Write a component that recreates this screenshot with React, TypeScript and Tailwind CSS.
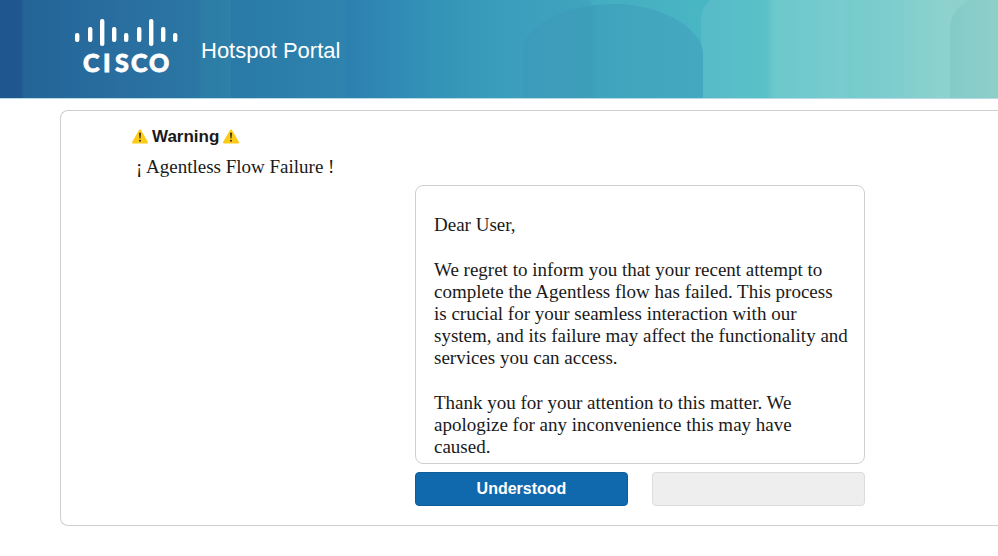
import React from "react";

function HeaderArt() {
  return (
    <svg
      className="absolute inset-0 h-full w-full"
      viewBox="0 0 998 98"
      preserveAspectRatio="none"
      aria-hidden="true"
    >
      <defs>
        <linearGradient id="base" gradientUnits="userSpaceOnUse" x1="0" y1="0" x2="998" y2="0">
          <stop offset="0" stopColor="#1f558f" />
          <stop offset="0.021" stopColor="#20578f" />
          <stop offset="0.024" stopColor="#246497" />
          <stop offset="0.1" stopColor="#286c9e" />
          <stop offset="0.199" stopColor="#2b77a4" />
          <stop offset="0.202" stopColor="#2c7ca5" />
          <stop offset="0.231" stopColor="#2e80a8" />
          <stop offset="0.2311" stopColor="#2a79a7" />
          <stop offset="0.343" stopColor="#2e84ae" />
          <stop offset="0.35" stopColor="#2c80b0" />
          <stop offset="0.44" stopColor="#3494b8" />
          <stop offset="0.5" stopColor="#3b9dbc" />
          <stop offset="0.59" stopColor="#40a4bd" />
          <stop offset="0.594" stopColor="#44acc0" />
          <stop offset="0.7" stopColor="#49b6c4" />
          <stop offset="0.71" stopColor="#49b6c4" />
        </linearGradient>
        <linearGradient id="light" gradientUnits="userSpaceOnUse" x1="701" y1="0" x2="998" y2="0">
          <stop offset="0" stopColor="#57bac8" />
          <stop offset="0.22" stopColor="#5ac1c7" />
          <stop offset="0.245" stopColor="#6bc8cb" />
          <stop offset="0.48" stopColor="#79cccf" />
          <stop offset="0.5" stopColor="#75cbcb" />
          <stop offset="0.65" stopColor="#7fcdce" />
          <stop offset="0.83" stopColor="#8ed2cd" />
          <stop offset="1" stopColor="#90cfc9" />
        </linearGradient>
        <linearGradient id="dome" gradientUnits="userSpaceOnUse" x1="523" y1="0" x2="703" y2="0">
          <stop offset="0" stopColor="#3c9bba" />
          <stop offset="0.39" stopColor="#3e9fba" />
          <stop offset="0.42" stopColor="#40a3bd" />
          <stop offset="1" stopColor="#43a9c0" />
        </linearGradient>
        <linearGradient id="edge" gradientUnits="userSpaceOnUse" x1="950" y1="0" x2="998" y2="0">
          <stop offset="0" stopColor="#83cbc7" />
          <stop offset="1" stopColor="#8ecfc9" />
        </linearGradient>
      </defs>
      <rect width="998" height="98" fill="url(#base)" />
      <path d="M701 98V20C701 12 704 5 710 0H998V98Z" fill="url(#light)" />
      <path d="M523 98V50C525 22 570 4 614 4C660 4 703 28 703 54V98Z" fill="url(#dome)" />
      <path d="M950 98V27C951 15 958 5 970 0H998V98Z" fill="url(#edge)" />
    </svg>
  );
}

const logoBars = [
  { x: 75, y: 33, h: 9 },
  { x: 88, y: 27, h: 15 },
  { x: 100, y: 19, h: 27 },
  { x: 112, y: 27, h: 15 },
  { x: 124, y: 33, h: 9 },
  { x: 137, y: 27, h: 15 },
  { x: 149, y: 19, h: 27 },
  { x: 161, y: 27, h: 15 },
  { x: 173, y: 33, h: 9 },
];

function CiscoLogo() {
  return (
    <svg className="h-16 w-[104px] shrink-0" viewBox="75 18 104 64" fill="white" role="img" aria-label="Cisco">
      {logoBars.map((b) => (
        <rect key={b.x} x={b.x} y={b.y} width="4.4" height={b.h} rx="2" />
      ))}
      <text
        x="83 103 115 131 149"
        y="72"
        stroke="white"
        strokeWidth="0.8"
        className="font-['Lato',sans-serif] text-[25px] font-black"
      >
        CISCO
      </text>
    </svg>
  );
}

function WarningIcon() {
  return (
    <svg className="h-4 w-4 shrink-0" viewBox="0 0 16 16" aria-hidden="true">
      <path
        d="M7.2 .8Q8 -.3 8.8 .8L15.9 13Q16.4 14.4 15.1 14.4H.9Q-.4 14.4 .1 13Z"
        fill="#fdcb17"
      />
      <path d="M7 4Q8 3.2 9 4L8.5 9.6H7.5Z" fill="#3b2f10" />
      <circle cx="8" cy="11.7" r="1" fill="#3b2f10" />
    </svg>
  );
}

export default function App() {
  return (
    <div className="min-h-screen bg-white font-['Liberation_Sans',Arial,sans-serif] text-[#1a1a1a]">
      <header className="relative h-[99px] overflow-hidden border-b border-[#b5dbe8]">
        <HeaderArt />
        <div className="relative flex items-start gap-[22px] pt-[18px] pl-[75px] text-white">
          <CiscoLogo />
          <h1 className="pt-5 text-[22px] leading-[26px]">Hotspot Portal</h1>
        </div>
      </header>

      <main className="mt-[11px] ml-[60px] rounded-l-lg border border-r-0 border-[#cfcfcf] pt-4 pb-[19px] pl-[71px]">
        <h2 className="flex items-center gap-1 text-[17px] leading-5 font-bold">
          <WarningIcon />
          Warning
          <WarningIcon />
        </h2>
        <p className="mt-2 pl-1 font-['Liberation_Serif','Times_New_Roman',serif] text-[19px] leading-6">
          ¡ Agentless Flow Failure !
        </p>

        <div className="mt-1.5 ml-[283px] w-[450px]">
          <div className="flex flex-col gap-[23px] rounded-lg border border-[#cfcfcf] pt-7 pr-4 pb-[5px] pl-[18px] font-['Liberation_Serif','Times_New_Roman',serif] text-[19px] leading-[22px]">
            <p>Dear User,</p>
            <p>
              We regret to inform you that your recent attempt to complete the Agentless flow has
              failed. This process is crucial for your seamless interaction with our system, and its
              failure may affect the functionality and services you can access.
            </p>
            <p>
              Thank you for your attention to this matter. We apologize for any inconvenience this
              may have caused.
            </p>
          </div>
          <div className="mt-2 grid grid-cols-2 gap-6">
            <button
              type="button"
              className="h-[34px] rounded-sm border border-[#0d5c9c] bg-[#1069ad] text-base font-bold text-white"
            >
              Understood
            </button>
            <button
              type="button"
              disabled
              className="h-[34px] rounded-sm border border-[#dcdcdc] bg-[#eeeeee]"
            />
          </div>
        </div>
      </main>
    </div>
  );
}
